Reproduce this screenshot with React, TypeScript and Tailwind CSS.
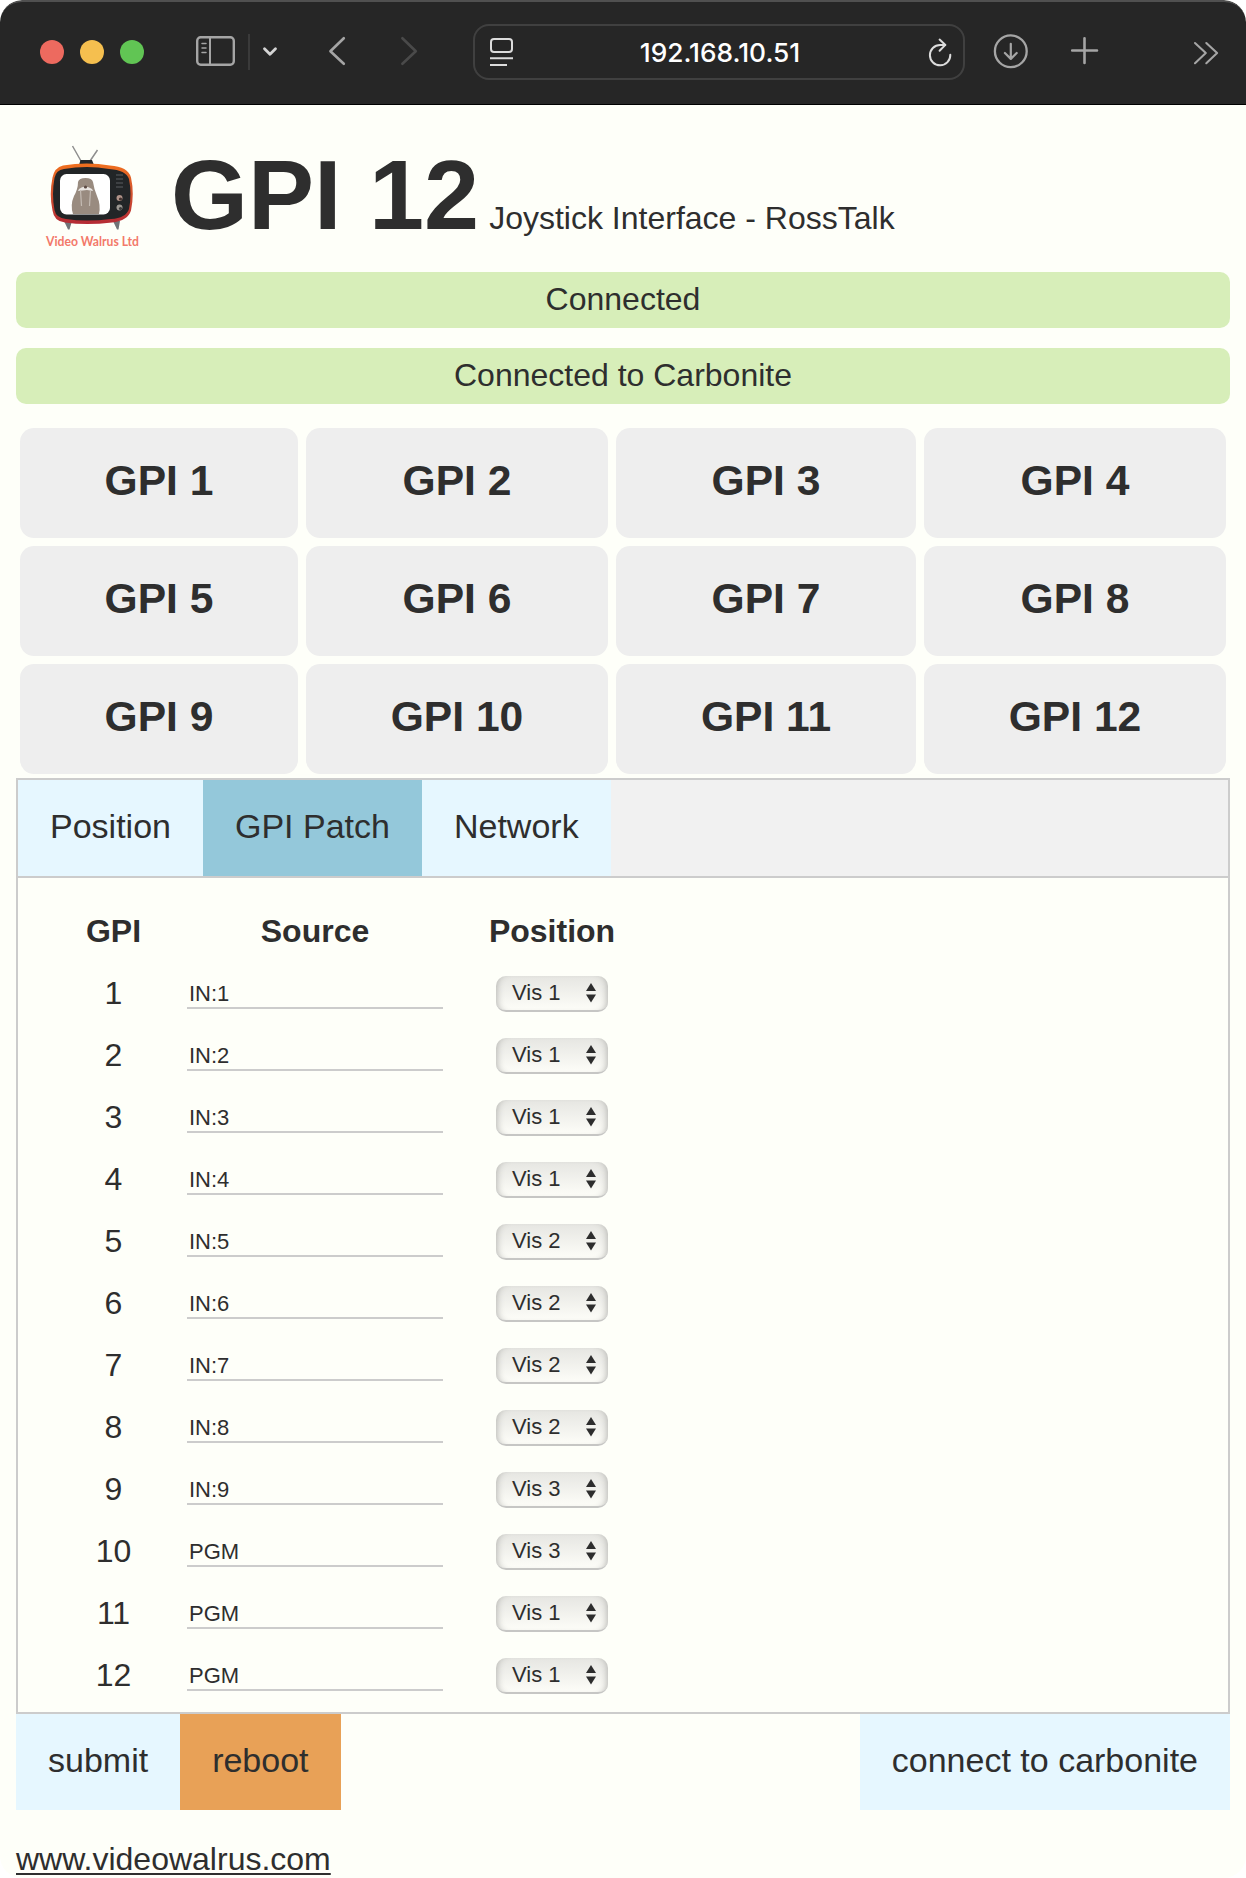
import type { ReactNode } from 'react';

const gpiRows = [
  ['GPI 1', 'GPI 2', 'GPI 3', 'GPI 4'],
  ['GPI 5', 'GPI 6', 'GPI 7', 'GPI 8'],
  ['GPI 9', 'GPI 10', 'GPI 11', 'GPI 12'],
];

const patches = [
  { source: 'IN:1', position: 'Vis 1' },
  { source: 'IN:2', position: 'Vis 1' },
  { source: 'IN:3', position: 'Vis 1' },
  { source: 'IN:4', position: 'Vis 1' },
  { source: 'IN:5', position: 'Vis 2' },
  { source: 'IN:6', position: 'Vis 2' },
  { source: 'IN:7', position: 'Vis 2' },
  { source: 'IN:8', position: 'Vis 2' },
  { source: 'IN:9', position: 'Vis 3' },
  { source: 'PGM', position: 'Vis 3' },
  { source: 'PGM', position: 'Vis 1' },
  { source: 'PGM', position: 'Vis 1' },
];

function BrowserBar() {
  return (
    <header className="flex h-[105px] items-start rounded-t-[22px] border-t-2 border-b border-t-[#505050] border-b-black bg-[#262626] pl-10">
      <div className="mt-[38px] flex gap-4">
        <span className="size-6 rounded-full bg-[#ed6a5f]" />
        <span className="size-6 rounded-full bg-[#f5bf4f]" />
        <span className="size-6 rounded-full bg-[#61c554]" />
      </div>
      <svg className="mt-[33px] ml-[51px] shrink-0" width="42" height="34" viewBox="195 35 42 34" fill="none" stroke="#a5a5a5">
        <rect x="197.2" y="37.2" width="36.6" height="27.6" rx="3.5" strokeWidth="2.4" />
        <path d="M210 37v28" strokeWidth="2" />
        <path d="M202 43.5h4M202 48h4M202 52.5h4" strokeWidth="1.5" strokeLinecap="round" />
      </svg>
      <span className="mt-8 ml-[11px] h-9 w-0.5 bg-[#3a3a3a]" />
      <svg className="mt-[42px] ml-[10px] shrink-0" width="20" height="16" viewBox="260 44 20 16" fill="none" stroke="#d4d4d4" strokeWidth="2.8" strokeLinecap="round" strokeLinejoin="round">
        <path d="M264.5 48.7l5.5 5.6 5.5-5.6" />
      </svg>
      <svg className="mt-8 ml-[45px] shrink-0" width="24" height="34" viewBox="325 34 24 34" fill="none" stroke="#a5a5a5" strokeWidth="2.6" strokeLinecap="round" strokeLinejoin="round">
        <path d="M343.8 38.2l-13.4 13 13.4 12.6" />
      </svg>
      <svg className="mt-8 ml-12 shrink-0" width="24" height="34" viewBox="397 34 24 34" fill="none" stroke="#4a4a4a" strokeWidth="2.6" strokeLinecap="round" strokeLinejoin="round">
        <path d="M402.4 38.2l13.4 13-13.4 12.6" />
      </svg>
      <div className="mt-[22px] ml-[52px] flex h-14 w-[492px] items-start rounded-[16px] border-2 border-[#404040]">
        <svg className="mt-2.5 ml-[13px] shrink-0" width="28" height="32" viewBox="489 36 28 32" fill="none" stroke="#dcdcdc">
          <rect x="492" y="39" width="21" height="13" rx="3" strokeWidth="2" />
          <path d="M491 58.3h23M491 65h17" strokeWidth="2" />
        </svg>
        <span className="mt-[3px] ml-[122px] flex w-[164px] justify-center font-['Inter'] text-[26.3px] leading-[48px] font-medium whitespace-nowrap text-white">
          192.168.10.51
        </span>
        <svg className="mt-2.5 ml-[124px] shrink-0" width="28" height="34" viewBox="927 36 28 34" fill="none" stroke="#dcdcdc" strokeWidth="2" strokeLinecap="round" strokeLinejoin="round">
          <path d="M951.3 54.8a10.2 10.2 0 1 1-10.2-9.9h5" />
          <path d="M940.6 39.6l5.8 5.3-5.8 5.8" />
        </svg>
      </div>
      <svg className="mt-[31px] ml-[27px] shrink-0" width="38" height="38" viewBox="993 33 38 38" fill="none" stroke="#a5a5a5" strokeLinecap="round" strokeLinejoin="round">
        <circle cx="1011.8" cy="51.3" r="15.9" strokeWidth="2.3" />
        <path d="M1011.8 43.8v14.8M1005.9 53l5.9 5.9 5.9-5.9" strokeWidth="2.2" />
      </svg>
      <svg className="mt-[33px] ml-[39px] shrink-0" width="32" height="32" viewBox="1070 35 32 32" fill="none" stroke="#a5a5a5" strokeWidth="2.6" strokeLinecap="round">
        <path d="M1085.5 38.2v24.8M1073.2 50.5h24.8" />
      </svg>
      <svg className="mt-[38px] ml-[90px] shrink-0" width="30" height="26" viewBox="1192 40 30 26" fill="none" stroke="#a5a5a5" strokeWidth="2.1" strokeLinecap="round" strokeLinejoin="round">
        <path d="M1196 43l10.8 10.1L1196 63.2M1207.3 43l10.8 10.1-10.8 10.1" />
      </svg>
    </header>
  );
}

function Logo() {
  return (
    <svg className="mt-10 ml-7 shrink-0" width="100" height="104" viewBox="44 145 100 104">
      <defs>
        <linearGradient id="shell" x1="0" y1="0" x2="0" y2="1">
          <stop offset="0" stopColor="#f0701f" />
          <stop offset="0.5" stopColor="#d2512f" />
          <stop offset="1" stopColor="#b42a35" />
        </linearGradient>
      </defs>
      <path d="M72.500 146l8.500 15M97.500 150l-7.500 11" stroke="#8f8f8f" strokeWidth="1.500" fill="none" />
      <path d="M79 165l1.500-5h11.500l2 5z" fill="#25292c" />
      <path d="M64 221h8l-2.500 8.500h-1.500zM113 221h7l-1.500 8.500h-1.500z" fill="#707478" />
      <path d="M63 165.500q24-4 47 0 18 1 21 12 3.500 16 0 33-3 10-19 12-26 3-47 0-11-1-12.500-12-3.500-16 0-33 2-10 10.500-12z" fill="url(#shell)" />
      <path d="M64 169q23-4 45 0 17 1 20 10 3 15 0 30-3 9-18 10-25 3-45 0-10-1-11.500-9-3-16 0-32 1.500-8 9.500-9z" fill="#222527" />
      <rect x="60" y="174" width="50" height="40.500" rx="6.500" fill="#fff" />
      <path d="M78 182q1-4 7.500-4t7.500 4q1 7 4 14 4 9 2 18H73q-3-9 1-18 4-7 4-14z" fill="#998b80" />
      <path d="M79 189q6-5 13 0l1 2-6-1-9 1z" fill="#e9e5e2" />
      <circle cx="85.500" cy="187" r="1.600" fill="#5b4943" />
      <path d="M80.500 190l1 16M90.500 190l-1 16" stroke="#c4bbb3" strokeWidth="1.200" />
      <path d="M116 175h7M116 179h7M116 183h7M116 187h7" stroke="#3e4144" strokeWidth="2" />
      <circle cx="119.500" cy="198" r="3" fill="#b09389" />
      <circle cx="119.500" cy="207.500" r="3" fill="#9b9792" />
      <circle cx="120.500" cy="199" r="1.600" fill="#43322f" />
      <circle cx="120.500" cy="208.500" r="1.600" fill="#3a3a3a" />
      <text x="46" y="246" fill="#f3796a" fontFamily="Lato, sans-serif" fontSize="13" fontWeight="700" textLength="93" lengthAdjust="spacingAndGlyphs">
        Video Walrus Ltd
      </text>
    </svg>
  );
}

function StatusBar({ children }: { children: ReactNode }) {
  return <div className="h-14 rounded-[10px] bg-[#d7eeb9] text-center leading-[54px]">{children}</div>;
}

function PositionSelect({ value }: { value: string }) {
  return (
    <button className="mt-3.5 ml-[53px] flex h-9 w-28 items-start justify-between rounded-[10px] border-b-2 border-[#c6c6c4] bg-linear-to-b from-[#e6e6e2] to-[#fdfdf8] pr-3 pl-4 text-[22px] leading-[33px] shadow-[inset_7px_0_7px_-6px_#b4b4b0,inset_-7px_0_7px_-6px_#b4b4b0]">
      <span>{value}</span>
      <svg className="mt-[7px]" width="10" height="20" viewBox="0 0 10 20" fill="#2d2d2d">
        <path d="M5 0l5 8H0zM5 19.500l5-8H0z" />
      </svg>
    </button>
  );
}

export default function App() {
  return (
    <div className="h-[1878px] w-[1246px] overflow-hidden bg-white">
      <div className="h-full overflow-hidden rounded-[22px] bg-[#fefff9] font-['Liberation_Sans',Arial,sans-serif] text-[32px] text-[#2e2e2e]">
        <BrowserBar />
        <main className="px-4">
          <div className="flex h-[167px] items-start">
            <Logo />
            <div className="mt-10 ml-[27px] flex items-baseline gap-[10px] whitespace-nowrap">
              <h1 className="text-[99px] leading-[100px] font-bold">GPI 12</h1>
              <span className="leading-10">Joystick Interface - RossTalk</span>
            </div>
          </div>

          <div className="flex flex-col gap-5">
            <StatusBar>Connected</StatusBar>
            <StatusBar>Connected to Carbonite</StatusBar>
          </div>

          <div className="mt-6 mb-1 flex flex-col gap-2 px-1">
            {gpiRows.map((row) => (
              <div key={row[0]} className="grid grid-cols-[278px_302px_300px_302px] gap-2">
                {row.map((label) => (
                  <div key={label} className="h-[110px] rounded-[14px] bg-[#eeeeee] text-center text-[42.6px] leading-[105px] font-bold">
                    {label}
                  </div>
                ))}
              </div>
            ))}
          </div>

          <nav className="flex h-[100px] border-2 border-[#cccccc] bg-[#f1f1f1] text-[34px] leading-[92px]">
            <button className="flex bg-[#e6f7ff] px-8">Position</button>
            <button className="flex bg-[#94c8da] px-8">GPI Patch</button>
            <button className="flex bg-[#e6f7ff] px-8">Network</button>
          </nav>

          <section className="h-[836px] border-2 border-t-0 border-[#cccccc] pt-[22px] leading-[62px]">
            <div className="flex h-[62px] pl-[42px] text-center font-bold">
              <div className="w-[107px]">GPI</div>
              <div className="ml-5 w-64">Source</div>
              <div className="ml-[45px] w-32">Position</div>
            </div>
            {patches.map((patch, index) => (
              <div key={index} className="flex h-[62px] items-start pl-[42px]">
                <div className="w-[107px] text-center">{index + 1}</div>
                <input
                  className="mt-[17px] ml-5 h-[30px] w-64 border-b-2 border-[#cccccc] px-0.5 pt-0.5 text-[22px] leading-[26px]"
                  defaultValue={patch.source}
                />
                <PositionSelect value={patch.position} />
              </div>
            ))}
          </section>

          <div className="flex h-24 text-[34px] leading-[92px]">
            <button className="flex bg-[#e6f7ff] px-8">submit</button>
            <button className="flex bg-[#e8a157] px-8">reboot</button>
            <button className="ml-auto flex bg-[#e6f7ff] px-8">connect to carbonite</button>
          </div>

          <a className="mt-[31px] block leading-9 underline decoration-2 underline-offset-[3px] [text-decoration-skip-ink:none]">
            www.videowalrus.com
          </a>
        </main>
      </div>
    </div>
  );
}
